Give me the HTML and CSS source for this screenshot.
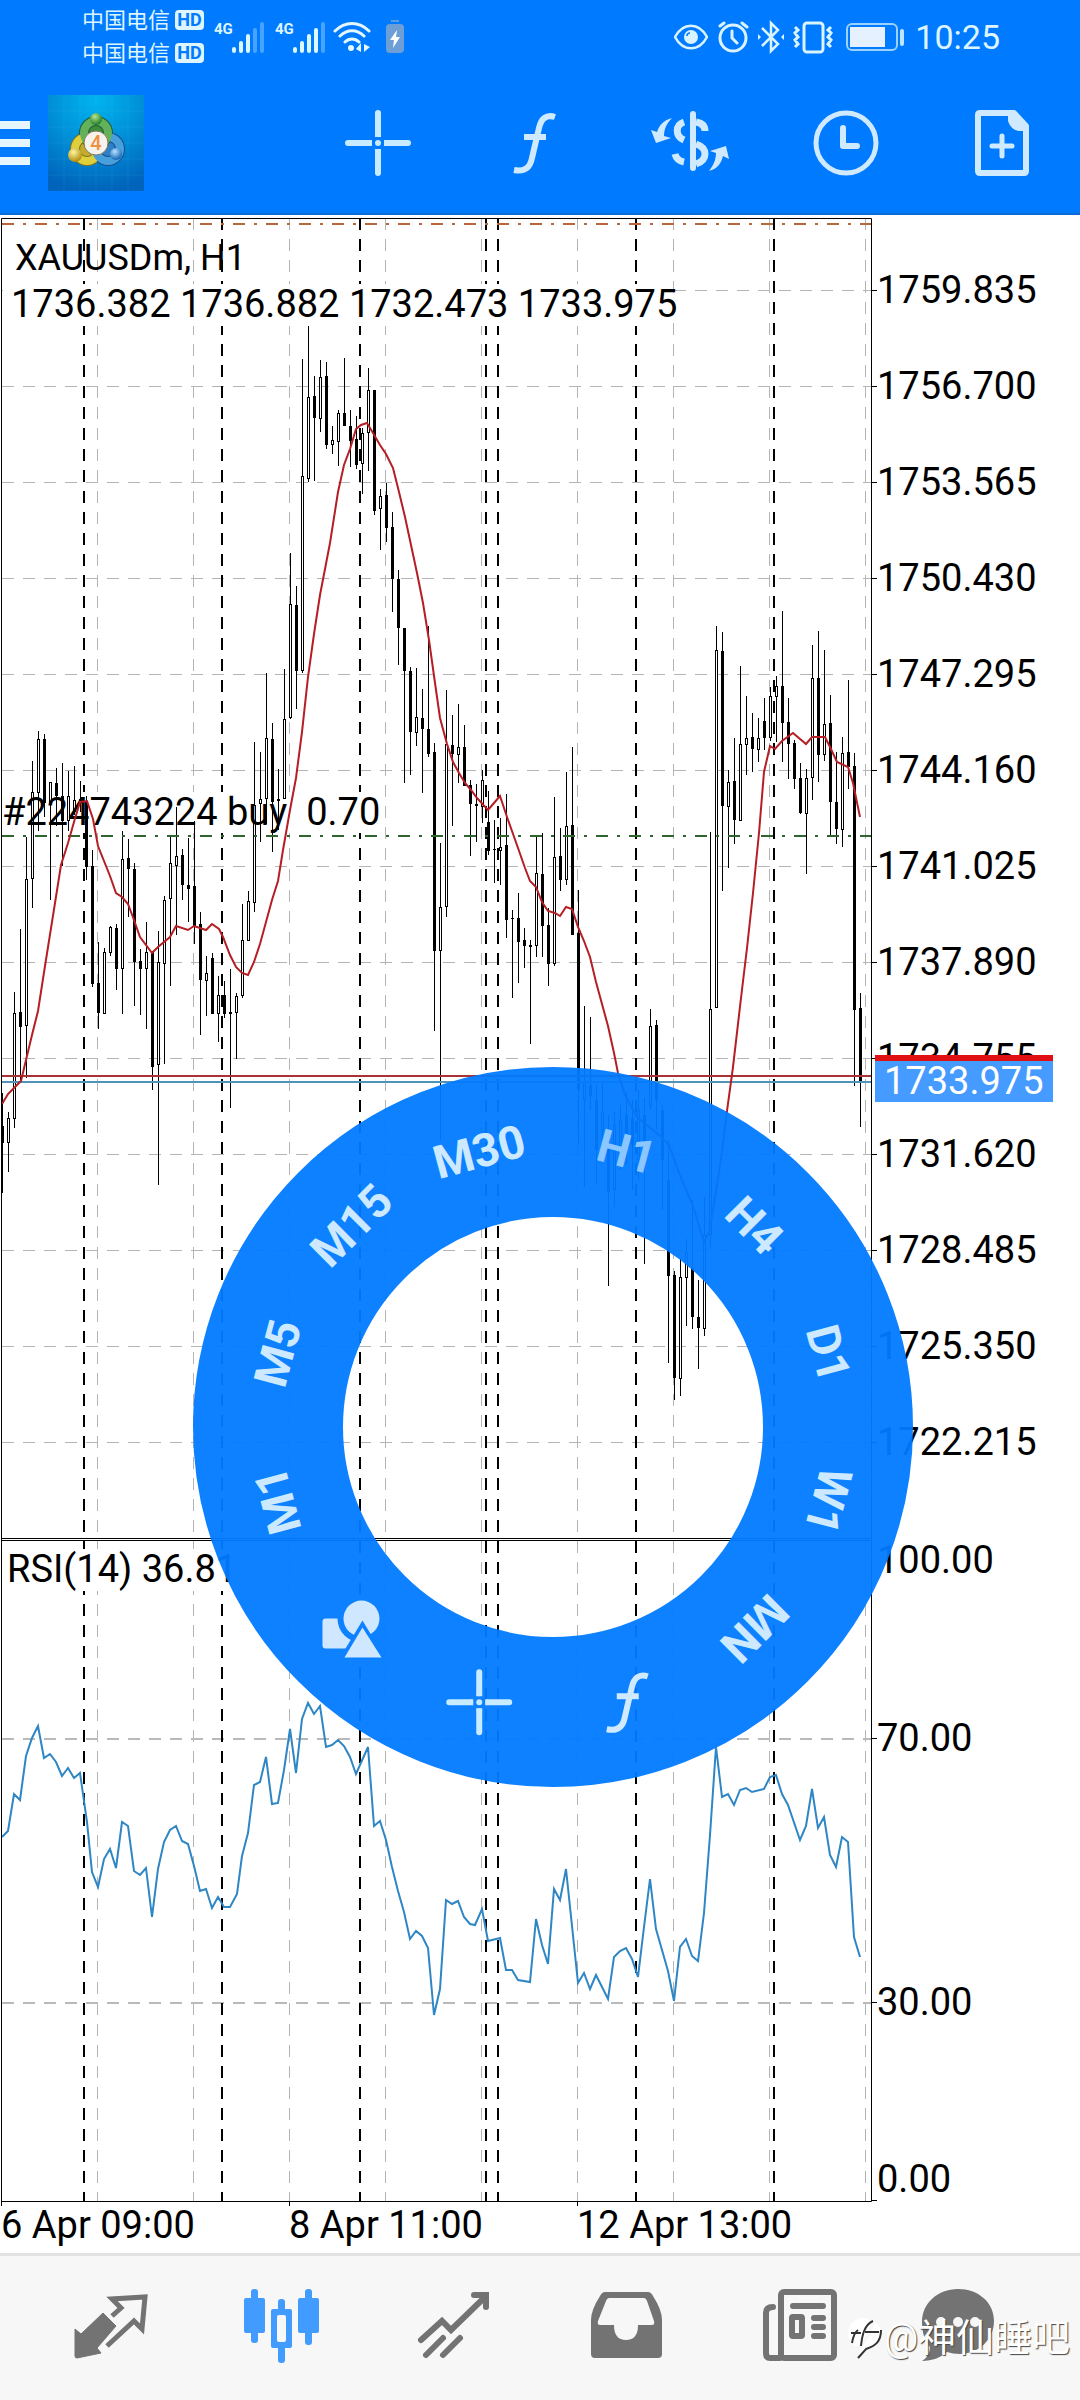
FILE: index.html
```
<!DOCTYPE html>
<html lang="zh-CN">
<head>
    <meta charset="utf-8">
    <meta name="viewport" content="width=device-width, initial-scale=1">
    <title>XAUUSDm, H1</title>
    <link rel="stylesheet" href="styles.css">
</head>
<body>

<header class="header">
    <div class="status-bar">
        <div class="status-left">
            <div class="carriers">
                <div class="carrier">中国电信 <span class="hd">HD</span></div>
                <div class="carrier">中国电信 <span class="hd">HD</span></div>
            </div>
            <div class="signal">
                <span class="net">4G</span>
                <svg width="34" height="32" viewBox="0 0 34 32">
                    <path d="M2 28v2M9 22v8M16 15v15" class="bar-on"/>
                    <path d="M23 9v21M30 3v27" class="bar-off"/>
                </svg>
            </div>
            <div class="signal">
                <span class="net">4G</span>
                <svg width="34" height="32" viewBox="0 0 34 32">
                    <path d="M2 28v2M9 22v8M16 15v15M23 9v21" class="bar-on"/>
                    <path d="M30 3v27" class="bar-off"/>
                </svg>
            </div>
            <svg class="wifi" width="38" height="32" viewBox="0 0 38 32">
                <path d="M2 10c10-10 24-10 34 0M7 15c7-7 17-7 24 0M12 21c4-4 10-4 14 0" fill="none" stroke="#e6f8ff" stroke-width="3" stroke-linecap="round"/>
                <circle cx="18" cy="27" r="3" fill="#e6f8ff"/>
                <path d="M23 28l5-6v9zM31 23l6 3-6 5z" fill="#e6f8ff"/>
            </svg>
            <svg width="18" height="34" viewBox="0 0 18 34">
                <rect x="5" y="0" width="8" height="2" fill="#5c9fe0"/>
                <rect y="4" width="18" height="29" rx="4" fill="#6d9fd6"/>
                <path d="M11 10l-7 10h4l-1 8 7-11h-4z" fill="#fff"/>
            </svg>
        </div>
        <div class="status-right">
            <svg width="34" height="34" viewBox="0 0 34 34" fill="none" stroke="#d9f4ff" stroke-width="2.5">
                <path d="M1 17C9 2 25 2 33 17 25 32 9 32 1 17z"/>
                <circle cx="17" cy="17" r="7" fill="#d9f4ff" stroke="none"/>
                <path d="M13 16c0-2 1-3 3-3" stroke="#007aff" stroke-width="1.5"/>
            </svg>
            <svg width="32" height="34" viewBox="0 0 32 34" fill="none" stroke="#d9f4ff" stroke-width="3" stroke-linecap="round">
                <circle cx="16" cy="18" r="13"/>
                <path d="M15 11v7l5 5M3 6l4-3M25 3l5 4"/>
            </svg>
            <svg width="26" height="34" viewBox="0 0 26 34" fill="none" stroke="#d9f4ff" stroke-width="2.5">
                <path d="M4 8l16 16-7 7V3l7 7L4 26"/>
                <path d="M0 14l3 3-3 3zM26 14l-3 3 3 3z" fill="#d9f4ff" stroke="none"/>
            </svg>
            <svg width="40" height="34" viewBox="0 0 40 34" fill="none" stroke="#d9f4ff" stroke-width="3">
                <rect x="11" y="3" width="19" height="29" rx="3"/>
                <path d="M2 7l3 3-3 3 3 4-3 3 3 4-3 3M38 7l-3 3 3 3-3 4 3 3-3 4 3 3"/>
            </svg>
            <svg class="battery" width="60" height="30" viewBox="0 0 60 30">
                <rect x="1" y="2" width="50" height="26" rx="5" fill="none" stroke="#9bd2ff" stroke-width="2"/>
                <rect x="4" y="5" width="35" height="20" fill="#e6f1ff"/>
                <rect x="54" y="7" width="4" height="17" rx="2" fill="#bfe4ff"/>
            </svg>
            <span class="clock">10:25</span>
        </div>
    </div>

    <div class="toolbar">
        <button class="menu-btn" aria-label="Menu"><i></i><i></i><i></i></button>
        <svg class="app-logo" viewBox="0 0 96 96">
            <defs>
                <radialGradient id="tile" cx="50%" cy="5%" r="95%">
                    <stop offset="0" stop-color="#00b4ee"/>
                    <stop offset="0.5" stop-color="#0090d8"/>
                    <stop offset="1" stop-color="#0064bc"/>
                </radialGradient>
                <radialGradient id="ball-g" cx="40%" cy="30%" r="70%"><stop offset="0" stop-color="#b8e68c"/><stop offset="1" stop-color="#1f7a28"/></radialGradient>
                <radialGradient id="ball-y" cx="40%" cy="30%" r="70%"><stop offset="0" stop-color="#fff49c"/><stop offset="1" stop-color="#b08c10"/></radialGradient>
                <radialGradient id="ball-b" cx="40%" cy="30%" r="70%"><stop offset="0" stop-color="#b4e2ff"/><stop offset="1" stop-color="#1564b4"/></radialGradient>
            </defs>
            <rect width="96" height="96" fill="url(#tile)"/>
            <path d="M16 0v96M32 0v96M48 0v96M64 0v96M80 0v96M0 16h96M0 32h96M0 48h96M0 64h96M0 80h96" stroke="#5cc8f0" stroke-opacity="0.12"/>
            <g stroke="#215c3c" stroke-width="10">
                <circle cx="39" cy="54" r="12" fill="#c2ad2a" stroke="#7d7320"/>
                <circle cx="60" cy="54" r="12" fill="#2f7fc4" stroke="#174f8c"/>
                <circle cx="48" cy="38" r="12" fill="#3d8f3c"/>
            </g>
            <g fill="none" stroke-width="8">
                <circle cx="39" cy="54" r="12" stroke="#e0cf3c"/>
                <circle cx="60" cy="54" r="12" stroke="#479fdc"/>
                <circle cx="48" cy="38" r="12" stroke="#63b25a"/>
            </g>
            <circle cx="48" cy="24" r="6" fill="url(#ball-g)"/>
            <circle cx="27" cy="60" r="7" fill="url(#ball-y)"/>
            <circle cx="68" cy="59" r="6" fill="url(#ball-b)"/>
            <circle cx="48" cy="48" r="12" fill="#f6f3ef" stroke="#86795c"/>
            <text x="48" y="55" class="logo-num">4</text>
        </svg>
        <div class="tools">
            <button aria-label="Crosshair">
                <svg width="72" height="72" viewBox="0 0 72 72"><use href="#icon-cross"/></svg>
            </button>
            <button aria-label="Indicators">
                <svg width="72" height="72" viewBox="0 0 72 72"><use href="#icon-func"/></svg>
            </button>
            <button aria-label="Symbols">
                <svg width="84" height="72" viewBox="0 0 84 72">
                    <path d="M45 7v54" stroke="#cfe9ff" stroke-width="6" stroke-linecap="round"/>
                    <path d="M36 15c-9 3-9 14 0 18M48 15c6 1 9 4 9 9M48 37c12 4 12 16 0 20M27 47c1 4 4 7 9 8" fill="none" stroke="#cfe9ff" stroke-width="7"/>
                    <path d="M24 11c-8 2-13 7-15 14l-6-2 5 13 15-5-7-2c0-7 3-13 8-18z" fill="#cfe9ff"/>
                    <path d="M61 64c8-2 12-7 14-15l6 3-3-13-16 5 6 2c0 7-3 13-7 18z" fill="#cfe9ff"/>
                </svg>
            </button>
            <button aria-label="Timeframe">
                <svg width="72" height="72" viewBox="0 0 72 72" fill="none" stroke="#cfe9ff" stroke-linecap="round" stroke-linejoin="round">
                    <circle cx="36" cy="36" r="30" stroke-width="5"/>
                    <path d="M33 21v18h14" stroke-width="6"/>
                </svg>
            </button>
            <button aria-label="New order">
                <svg width="72" height="72" viewBox="0 0 72 72" fill="none" stroke="#cfe9ff" stroke-linecap="round" stroke-linejoin="round">
                    <path d="M12 8q0-2 2-2h34l12 13v45q0 2-2 2H14q-2 0-2-2z" stroke-width="6"/>
                    <path d="M42 6h6l12 12v6h-7q-8-1-11-10z" fill="#cfe9ff" stroke="none"/>
                    <path d="M36 29v20M26 39h20" stroke-width="5"/>
                </svg>
            </button>
        </div>
    </div>
</header>

<main class="chart-panel">
    <svg class="chart" id="chart" viewBox="0 215 1080 2038">
        <g id="grid"></g>

        <rect x="3" y="284" width="670" height="42" fill="#fff"/>
        <rect x="3" y="792" width="372" height="41" fill="#fff"/>
        <rect x="3" y="1549" width="232" height="42" fill="#fff"/>

        <g id="candles"></g>
        <text x="15" y="270" class="symbol">XAUUSDm, H1</text>
        <text x="11" y="317">1736.382 1736.882 1732.473 1733.975</text>
        <text x="2" y="825">#224743224 buy  0.70</text>
        <text x="7" y="1582">RSI(14) 36.81</text>

        <path class="dash-dot stop" d="M2 224H871"/>
        <path class="dash-dot order" d="M2 836H871"/>
        <path class="ask" d="M2 1076H872"/>
        <path class="bid" d="M2 1082H872"/>
        <polyline class="ma" points="2,1104 8,1094 14,1088 21,1081 26,1060 32,1035 38,1011 45,966 55,903 61,865 68,843 74,822 80,802 87,801 93,819 98,846 110,876 116,893 122,897 128,904 134,920 140,937 152,953 158,947 170,937 176,926 188,930 194,926 206,930 212,924 219,929 223,937 230,955 236,967 242,973 248,975 254,962 260,944 272,900 278,881 283,850 290,810 296,778 302,732 308,677 314,634 320,595 330,543 338,492 344,465 350,449 356,429 361,425 367,423 373,433 380,445 386,454 393,468 399,492 405,517 411,545 417,573 423,603 429,640 435,683 440,718 447,744 453,762 459,773 465,783 471,790 477,798 488,810 494,803 500,796 507,817 518,848 525,868 530,881 536,887 542,902 548,911 555,913 560,916 566,907 572,909 578,927 584,941 590,957 596,982 602,1004 608,1026 614,1053 618,1073 625,1095 637,1117 660,1136 669,1145 679,1173 693,1206 704,1242 710,1230 721,1159 727,1111 733,1067 741,998 747,948 753,893 759,833 764,772 770,746 775,749 782,741 793,733 806,744 812,737 825,737 830,747 837,762 848,767 853,783 860,817"/>
        <polyline class="rsi" points="2,1837 8,1831 14,1794 20,1800 26,1756 32,1738 38,1726 44,1758 50,1754 56,1762 62,1776 68,1768 74,1778 80,1773 87,1822 92,1872 98,1887 104,1859 110,1849 116,1868 122,1822 128,1826 134,1871 140,1875 146,1868 152,1917 158,1869 164,1842 170,1830 176,1826 182,1841 188,1844 194,1866 200,1891 206,1889 212,1908 218,1897 224,1907 230,1907 237,1894 242,1856 248,1833 254,1785 260,1782 266,1757 272,1804 278,1803 284,1770 290,1729 296,1773 302,1719 308,1703 314,1714 320,1706 326,1747 332,1745 338,1740 344,1746 350,1757 356,1774 368,1747 374,1826 380,1821 386,1840 392,1867 398,1891 404,1912 410,1939 416,1931 422,1936 428,1948 434,2015 440,1989 446,1900 452,1904 458,1901 464,1917 470,1924 475,1925 482,1909 488,1941 500,1938 506,1970 512,1970 518,1980 530,1982 536,1919 542,1945 548,1964 554,1889 560,1900 566,1869 578,1983 584,1973 590,1989 596,1975 608,1999 614,1957 620,1951 626,1948 632,1959 638,1977 644,1927 650,1879 656,1929 668,1971 674,2001 680,1947 686,1939 692,1956 698,1961 704,1913 710,1835 716,1747 722,1797 728,1794 734,1805 740,1790 746,1788 752,1792 764,1789 770,1777 776,1775 782,1794 788,1805 800,1840 806,1826 812,1789 818,1828 824,1817 830,1855 836,1867 842,1837 848,1842 854,1937 860,1957"/>

        <g id="axis"></g>
        <rect x="875" y="1058" width="178" height="44" fill="#459bff"/>
        <rect x="875" y="1055" width="178" height="6" fill="#e00f14"/>
        <text x="884" y="1094" class="price-now">1733.975</text>
    </svg>

    <div class="wheel">
        <button style="--a: -105deg">M1</button>
        <button style="--a: -75deg">M5</button>
        <button style="--a: -45deg">M15</button>
        <button style="--a: -15deg">M30</button>
        <button style="--a: 15deg" class="current">H1</button>
        <button style="--a: 45deg">H4</button>
        <button style="--a: 75deg">D1</button>
        <button style="--a: 105deg">W1</button>
        <button style="--a: 135deg">MN</button>
        <button style="--a: 165deg" class="upright" aria-label="Indicators">
            <svg width="72" height="72" viewBox="0 0 72 72"><use href="#icon-func"/></svg>
        </button>
        <button style="--a: 195deg" class="upright" aria-label="Crosshair">
            <svg width="72" height="72" viewBox="0 0 72 72"><use href="#icon-cross"/></svg>
        </button>
        <button style="--a: 225deg" class="upright" aria-label="Objects">
            <svg width="72" height="72" viewBox="0 0 72 72" fill="#cfe7ff">
                <rect x="7" y="26" width="29" height="30" rx="3"/>
                <circle cx="46" cy="26" r="24" fill="#0d81ff"/>
                <circle cx="46" cy="26" r="18"/>
                <path d="M47 28l23 38H24z" fill="#0d81ff"/>
                <path d="M47 35l19 30H29z"/>
            </svg>
        </button>
    </div>
</main>

<nav class="tab-bar">
    <a href="#quotes" aria-label="Quotes">
        <svg width="84" height="84" viewBox="0 0 84 84">
            <path d="M35 29l13 13-19 22 4 5-24 5q-2 0-2-2V45l6 5z" fill="currentColor" stroke="currentColor" stroke-linejoin="round"/>
            <path d="M44 32l9-8-9-9 33-2-3 32-8-8-27 25" fill="none" stroke="currentColor" stroke-width="5"/>
        </svg>
    </a>
    <a href="#charts" class="active" aria-label="Charts">
        <svg width="84" height="84" viewBox="0 0 84 84" fill="currentColor">
            <rect x="4" y="14" width="21" height="35" rx="2"/>
            <rect x="11" y="5" width="7" height="54" rx="3"/>
            <rect x="38" y="15" width="7" height="64" rx="3"/>
            <rect x="31" y="25" width="21" height="39" rx="2"/>
            <rect x="37" y="31" width="9" height="27" rx="2" fill="#f7f7f7"/>
            <rect x="58" y="14" width="21" height="35" rx="2"/>
            <rect x="65" y="5" width="7" height="56" rx="3"/>
        </svg>
    </a>
    <a href="#trade" aria-label="Trade">
        <svg width="84" height="84" viewBox="0 0 84 84" fill="none" stroke="currentColor" stroke-width="6" stroke-linecap="round">
            <path d="M9 56l21-19 9 9 34-33M62 11h12v12M31 54L14 71M48 54L31 71"/>
        </svg>
    </a>
    <a href="#history" aria-label="History">
        <svg width="84" height="84" viewBox="0 0 84 84">
            <path fill="currentColor" fill-rule="evenodd" d="M21 8h43q3 0 5 4 9 14 9 24v34q0 4-4 4H11q-4 0-4-4V36Q7 26 16 12q2-4 5-4zM25 14q-2 0-3 3l-8 20q-1 4 2 4h14q0 15 12 15t12-15h14q3 0 2-4l-7-20q-1-3-3-3z"/>
        </svg>
    </a>
    <a href="#news" aria-label="News">
        <svg width="84" height="84" viewBox="0 0 84 84" fill="none" stroke="currentColor" stroke-width="6" stroke-linecap="round">
            <rect x="25" y="8" width="53" height="66" rx="3"/>
            <path d="M24 74H14q-4 0-4-5V29q0-6 7-6M37 22h30M58 34h9M58 43h9M58 52h9"/>
            <rect x="36" y="33" width="10" height="19" rx="1"/>
        </svg>
    </a>
    <a href="#chat" aria-label="Chat">
        <svg class="chat" width="84" height="84" viewBox="6 0 84 84">
            <path fill="currentColor" d="M36 5c20 0 36 13 36 32S56 70 38 70c-5 0-9-1-13-2-5 5-15 9-25 9 5-3 8-8 8-14C3 57 0 49 0 38 0 19 16 5 36 5z"/>
            <g fill="#f6f6f6"><circle cx="19" cy="38" r="5"/><circle cx="36" cy="38" r="5"/><circle cx="53" cy="38" r="5"/></g>
        </svg>
    </a>
    <div class="watermark">
        <svg width="38" height="44" viewBox="0 0 38 44">
            <path d="M18 2C8 2 2 9 2 17s4 12 9 13c10-9 13-17 13-24C22 3 20 2 18 2zM28 6c-1 9-5 18-14 26l-2 10 8-9c9-3 15-9 15-16 0-5-3-9-7-11z" fill="#fff"/>
            <path d="M6 27c1-6 3-11 6-13M5 17h10M27 5C18 9 16 20 15 30M19 16h14M35 14c0 12-6 16-15 19l-8 9" fill="none" stroke="#333" stroke-width="2"/>
        </svg>
        <span>@神仙睡吧</span>
    </div>
</nav>

<svg class="defs" width="0" height="0">
    <symbol id="icon-cross" viewBox="0 0 72 72">
        <path d="M6 36h21M45 36h21M36 6v21M36 45v21" stroke="#c8ebff" stroke-width="6" stroke-linecap="round"/>
        <path d="M27 36h3M42 36h3M36 27v3M36 42v3" stroke="#c8ebff" stroke-width="6"/>
        <circle cx="36" cy="36" r="3" fill="#c8ebff"/>
    </symbol>
    <symbol id="icon-func" viewBox="0 0 72 72">
        <path d="M57 10c-9-3-14 2-16 11l-7 30c-2 10-8 14-18 12M26 30h22" fill="none" stroke="#cfeaff" stroke-width="6"/>
    </symbol>
</svg>

<script>
    // [wick top, wick bottom, body top, body bottom, falling]
    const candles = [
        [1093,1193,1126,1143,1], [1112,1172,1118,1143,0], [992,1128,1013,1119,0], [929,1080,1012,1027,1],
        [837,1078,879,1026,0], [761,908,792,879,0], [731,831,739,793,0], [734,817,739,803,1],
        [782,900,782,803,0], [768,826,783,796,1], [763,866,796,821,1], [771,831,796,821,0],
        [766,815,800,812,0], [781,812,799,803,0], [796,880,801,867,1], [850,987,866,984,1],
        [942,1029,983,1013,1], [948,1014,952,1014,0], [926,956,927,953,0], [924,990,928,969,1],
        [831,1014,859,969,0], [839,917,858,869,1], [863,1006,869,962,1], [949,1015,961,969,1],
        [922,1029,952,969,0], [951,1090,952,1067,1], [931,1185,962,1065,0], [896,1064,900,964,0],
        [836,986,863,899,0], [807,935,856,866,0], [849,900,855,885,1], [838,922,885,889,1],
        [821,944,886,926,1], [912,1035,924,980,1], [956,1016,973,981,0], [953,1014,958,1014,1],
        [976,1042,995,1014,0], [981,1018,995,1014,1], [969,1108,1012,1014,0], [993,1059,996,1013,0],
        [904,998,940,996,0], [891,941,901,941,0], [742,912,805,903,0], [752,842,799,804,0],
        [673,824,738,799,0], [723,852,739,802,1], [769,830,799,801,1], [669,799,719,799,0],
        [553,719,604,718,0], [586,709,605,671,1], [359,673,476,671,0], [326,482,397,479,0],
        [376,481,396,418,1], [360,432,377,419,0], [362,449,376,445,1], [426,454,440,445,0],
        [410,466,413,442,0], [358,426,413,426,1], [410,467,426,441,1], [416,469,439,465,1],
        [428,494,433,464,0], [368,471,390,433,0], [390,515,390,511,1], [489,550,496,509,0],
        [483,542,495,528,1], [512,612,527,579,1], [570,665,579,628,1], [628,783,628,671,1],
        [667,775,671,732,1], [668,746,717,733,0], [689,793,718,729,1], [626,757,729,754,1],
        [743,1031,752,951,1], [843,1140,907,951,0], [690,917,744,907,0], [715,826,745,754,1],
        [704,783,747,755,0], [725,786,747,786,1], [780,856,785,804,1], [784,842,804,806,1],
        [770,823,780,807,0], [791,855,822,851,1], [820,883,849,850,1], [818,885,847,851,0],
        [794,938,845,920,1], [910,998,918,919,1], [893,983,918,942,1], [928,968,940,946,1],
        [940,1044,945,947,1], [835,957,873,946,0], [833,957,874,926,1], [908,986,925,964,1],
        [797,966,857,964,0], [828,891,856,880,1], [772,885,826,880,0], [747,935,825,935,1],
        [890,1145,933,1090,1], [1006,1187,1082,1100,0], [1017,1110,1085,1096,1], [1085,1184,1100,1150,1],
        [1083,1150,1112,1130,0], [1115,1286,1130,1192,1], [1112,1207,1125,1190,0], [1105,1170,1120,1150,0],
        [1092,1165,1115,1140,1], [1100,1190,1118,1145,1], [1090,1180,1110,1160,0], [1098,1264,1115,1150,1],
        [1009,1110,1026,1107,0], [1020,1130,1025,1100,1], [1105,1210,1110,1160,1], [1140,1363,1180,1276,1],
        [1271,1400,1275,1378,1], [1258,1396,1277,1379,0], [1239,1326,1252,1278,0], [1200,1329,1268,1317,1],
        [1280,1369,1317,1328,1], [1197,1336,1235,1329,0], [832,1249,1009,1235,0], [626,1008,650,1008,0],
        [632,891,651,806,1], [770,868,782,807,0], [738,844,781,820,1], [666,821,744,821,0],
        [696,775,738,745,0], [713,772,737,749,1], [718,762,738,750,0], [698,750,721,738,1],
        [687,741,696,738,0], [676,742,686,697,0], [611,762,686,723,1], [698,779,722,744,1],
        [740,789,743,779,1], [763,814,778,813,1], [769,874,778,814,0], [645,800,678,778,0],
        [631,782,678,755,1], [650,761,724,755,0], [695,835,723,802,1], [752,844,802,829,1],
        [737,847,753,830,0], [680,789,752,767,1], [753,1086,766,1010,1], [993,1127,1008,1082,1]
    ];

    let candleHTML = "";
    candles.forEach(([high, low, top, bottom, falling], i) => {
        const x = 2 + i * 6;
        const type = falling ? "down" : "up";
        candleHTML += `<rect x="${x}" y="${high}" width="1" height="${low - high}"/>`;
        candleHTML += falling
            ? `<rect class="${type}" x="${x - 1}" y="${top}" width="3" height="${bottom - top}"/>`
            : `<rect class="${type}" x="${x - 0.5}" y="${top + 0.5}" width="2" height="${Math.max(bottom - top - 1, 1)}"/>`;
    });
    document.getElementById("candles").innerHTML = candleHTML;

    // grid and day separators
    let grid = "";
    for (let x = 97.5; x < 870; x += 96) {
        grid += `<path class="grid" d="M${x} 218V1538M${x} 1541V2201"/>`;
    }
    for (let y = 290.5; y < 1500; y += 96) {
        grid += `<path class="grid" d="M2 ${y}H871"/>`;
    }
    [1739, 2003].forEach(y => {
        grid += `<path class="level" d="M2 ${y}H871"/>`;
    });
    [84, 222, 360, 486, 498, 636, 774].forEach(x => {
        grid += `<path class="day" d="M${x} 218V1538M${x} 1541V2201"/>`;
    });
    document.getElementById("grid").innerHTML = grid;

    // frames, ticks and labels
    let axis = `<path class="frame" d="M1.5 218.5H871.5V2201.5H1.5zM1.5 1538.5H871.5M1.5 1540.5H871.5M1.5 2201v5M289.5 2201v5M577.5 2201v5"/>`;
    for (let i = 0; i < 13; i++) {
        const y = 290.5 + i * 96;
        const price = (1759.835 - i * 3.135).toFixed(3);
        axis += `<path class="frame" d="M871 ${y}h6"/><text x="877" y="${y + 12.5}">${price}</text>`;
    }
    [[1573, "100.00"], [1751, "70.00"], [2015, "30.00"], [2192, "0.00"]].forEach(([y, label]) => {
        axis += `<text x="877" y="${y}">${label}</text>`;
    });
    axis += `<path class="frame" d="M871 1738.5h6M871 2002.5h6M871 2200.5h6"/>`;
    [[1, "6 Apr 09:00"], [289, "8 Apr 11:00"], [577, "12 Apr 13:00"]].forEach(([x, label]) => {
        axis += `<text x="${x}" y="2238">${label}</text>`;
    });
    document.getElementById("axis").innerHTML = axis;
</script>

</body>
</html>
```
FILE: styles.css
```
* {
    box-sizing: border-box;
}

body {
    margin: 0;
    font-family: Roboto, "Noto Sans CJK SC", sans-serif;
    background: #fff;
    color: #000;
}

button {
    border: none;
    padding: 0;
    background: none;
    font-family: inherit;
    cursor: pointer;
}

svg {
    display: block;
    flex-shrink: 0;
}

.defs {
    position: absolute;
}

.header {
    background: #007aff;
    border-bottom: 2px solid #0a6cd8;
}

.status-bar {
    display: flex;
    justify-content: space-between;
    align-items: center;
    height: 73px;
    padding: 0 80px 0 82px;
    color: #dcf5ff;
}

.status-left, .status-right {
    display: flex;
    align-items: center;
}

.status-right {
    gap: 9px;
}

.carriers {
    margin-right: 10px;
}

.carrier {
    display: flex;
    align-items: center;
    gap: 5px;
    height: 33px;
    font-size: 22px;
    line-height: 33px;
}

.hd {
    width: 29px;
    height: 20px;
    border-radius: 4px;
    background: #dcf5ff;
    color: #007aff;
    font-size: 18px;
    font-weight: 700;
    line-height: 20px;
    text-align: center;
}

.signal {
    display: flex;
    align-items: flex-start;
    width: 61px;
}

.net {
    width: 18px;
    font-family: Roboto, sans-serif;
    font-size: 15px;
    font-weight: 700;
    line-height: 16px;
}

.bar-on, .bar-off {
    fill: none;
    stroke: #dcf8ff;
    stroke-width: 4;
    stroke-linecap: round;
}

.bar-off {
    stroke: #47a3ff;
}

.wifi {
    margin: 0 15px 0 -3px;
}

.battery {
    margin-left: 4px;
}

.clock {
    font-size: 34px;
    line-height: 40px;
}

.toolbar {
    display: flex;
    align-items: center;
    height: 140px;
}

.menu-btn {
    display: flex;
    flex-direction: column;
    gap: 10px;
    width: 48px;
}

.menu-btn i {
    width: 30px;
    height: 8px;
    background: #e6f6ff;
}

.app-logo {
    width: 96px;
    height: 96px;
}

.logo-num {
    font-size: 20px;
    font-weight: 500;
    fill: #f09040;
    text-anchor: middle;
}

.tools {
    display: flex;
    margin-left: auto;
}

.tools button {
    display: flex;
    justify-content: center;
    width: 156px;
}

.chart-panel {
    position: relative;
}

.chart {
    width: 100%;
}

.chart text {
    font-size: 38px;
    white-space: pre;
}

.chart .symbol {
    font-size: 36px;
}

.chart .price-now {
    fill: #fff;
}

.grid, .level, .day, .dash-dot, .ask, .bid, .ma, .rsi, .frame {
    fill: none;
}

.grid {
    stroke: #b4b4b4;
    stroke-dasharray: 12 9;
}

.level {
    stroke: #bababa;
    stroke-width: 2;
    stroke-dasharray: 12 9;
}

.day {
    stroke: #000;
    stroke-width: 2;
    stroke-dasharray: 12 9;
}

.dash-dot {
    stroke-width: 2;
    stroke-dasharray: 12 9 3 9;
}

.stop {
    stroke: #b8673c;
}

.order {
    stroke: #2f6630;
}

.ask {
    stroke: #a83236;
    stroke-width: 2;
}

.bid {
    stroke: #4f94b8;
    stroke-width: 2;
}

.ma {
    stroke: #b41e24;
    stroke-width: 2;
}

.rsi {
    stroke: #2f86c4;
    stroke-width: 2;
}

.frame {
    stroke: #000;
}

.up {
    fill: #fff;
    stroke: #000;
}

/* timeframe wheel over the chart */
.wheel {
    position: absolute;
    left: 193px;
    top: 852px;
    width: 720px;
    height: 720px;
    border: 150px solid rgba(0, 122, 255, 0.95);
    border-radius: 50%;
}

.wheel button {
    position: absolute;
    left: 160px;
    top: 180px;
    width: 100px;
    height: 60px;
    color: #cce9ff;
    font-size: 46px;
    font-weight: 700;
    line-height: 60px;
    transform: rotate(var(--a)) translateY(-285px);
}

.wheel .upright {
    display: flex;
    justify-content: center;
    align-items: center;
    transform: rotate(var(--a)) translateY(-285px) rotate(calc(-1 * var(--a)));
}

.wheel .current {
    color: #8cc6ff;
}

.tab-bar {
    position: relative;
    display: flex;
    align-items: center;
    height: 147px;
    padding: 0 24px 4px;
    border-top: 3px solid #e3e3e3;
    background: #f7f7f7;
}

.tab-bar a {
    display: flex;
    flex: 1;
    justify-content: center;
    color: #737373;
}

.tab-bar .active {
    color: #429bff;
}

.chat {
    overflow: visible;
}

.watermark {
    position: absolute;
    right: 10px;
    top: 58px;
    display: flex;
    align-items: center;
    color: #fff;
    font-size: 38px;
    line-height: 48px;
    text-shadow: 1px 1px 1px #444;
}
```
